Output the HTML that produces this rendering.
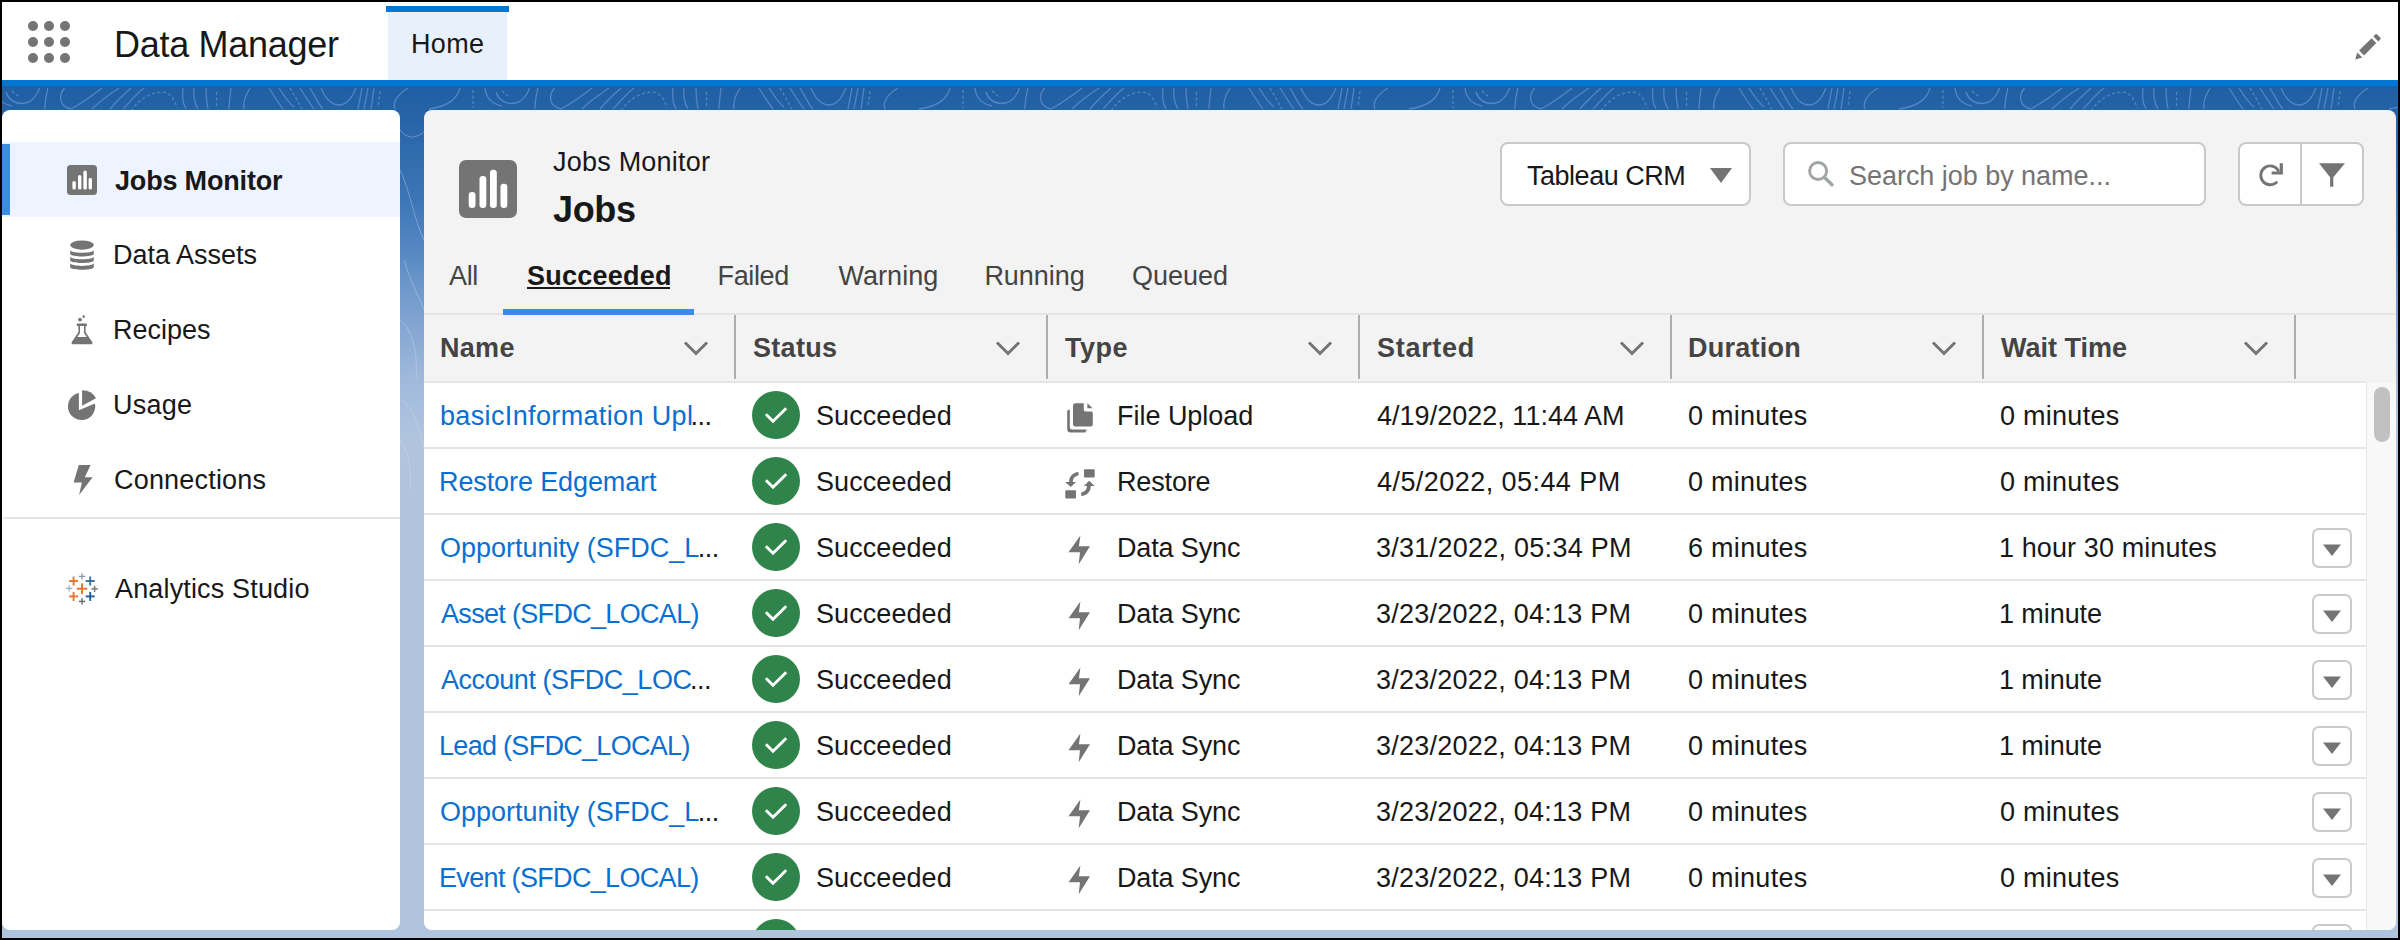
<!DOCTYPE html>
<html><head><meta charset="utf-8">
<style>
*{box-sizing:border-box;margin:0;padding:0}
html,body{width:2400px;height:940px;overflow:hidden;background:#000;font-family:"Liberation Sans",sans-serif;color:#181818}
.abs{position:absolute}
.t{position:absolute;white-space:nowrap}
#frame{position:absolute;left:0;top:0;width:2400px;height:940px;overflow:hidden}
#bg{position:absolute;left:2px;top:86px;width:2396px;height:852px;background:linear-gradient(to bottom,#1f5fa3 0px,#2562a6 24px,#3d76b7 114px,#5587c2 164px,#7099cc 204px,#a0b9db 294px,#b0c4de 354px,#b0c4de 100%)}
#hdr{position:absolute;left:2px;top:2px;width:2396px;height:78px;background:#fff}
.dot{position:absolute;width:10px;height:10px;border-radius:50%;background:#747474}
.box{border:2px solid #c9c9c9;border-radius:8px;background:#fff}
</style></head>
<body><div id="frame"><div id="bg"></div><svg class="abs" style="left:2px;top:86px;overflow:hidden" width="2396" height="24"><g fill="none" stroke="#6393cf" stroke-width="1.3" opacity="0.75"><g transform="translate(-490,0)"><g><path d="M4,6 C8,20 30,24 37.5,2"/><path d="M45.8,2 C44,10 43,18 42.7,23"/><path d="M62.5,2 C56,10 57,20 69,23"/><path d="M100,2 C90,10 78,18 69,23"/><path d="M117,2 C105,10 95,18 90,23"/><path d="M129,2 C120,10 112,18 108,23"/><path d="M142,2 C132,10 126,18 121,23"/><path d="M181,2 C180,10 181,18 184,23"/><path d="M192,2 C191,10 193,18 196,23"/><path d="M204,2 C204,10 205,18 206,23"/><path d="M229,2 C228,10 227,18 227,23"/><path d="M248,2 C243,10 241,18 242,23"/><path d="M267,2 C272,10 277,18 281,23"/><path d="M277,2 C282,10 287,17 292,21"/><path d="M298,2 C303,10 308,18 312,23"/><path d="M308,2 C313,10 316,18 321,23"/><path d="M319,2 C324,14 330,19 337,19 C345,19 350,12 354,2"/><path d="M360,2 L356,23"/><path d="M366,2 L362,23"/><path d="M372,2 L369,23"/><path d="M406,2 C396,8 390,16 393,23"/><path d="M458,2 C455,12 448,20 427,23"/><path d="M483,2 C484,12 490,18 500,20"/></g><g stroke-dasharray="3 2.5"><path d="M10,5 l6,5"/><path d="M129,25 C138,12 150,6 160,6 C168,6 173,14 175,22"/><path d="M214.5,6 V21"/><path d="M288,2 L300,23"/><path d="M378,5 L376,21"/><path d="M471,4 V22"/></g></g><g transform="translate(0,0)"><g><path d="M4,6 C8,20 30,24 37.5,2"/><path d="M45.8,2 C44,10 43,18 42.7,23"/><path d="M62.5,2 C56,10 57,20 69,23"/><path d="M100,2 C90,10 78,18 69,23"/><path d="M117,2 C105,10 95,18 90,23"/><path d="M129,2 C120,10 112,18 108,23"/><path d="M142,2 C132,10 126,18 121,23"/><path d="M181,2 C180,10 181,18 184,23"/><path d="M192,2 C191,10 193,18 196,23"/><path d="M204,2 C204,10 205,18 206,23"/><path d="M229,2 C228,10 227,18 227,23"/><path d="M248,2 C243,10 241,18 242,23"/><path d="M267,2 C272,10 277,18 281,23"/><path d="M277,2 C282,10 287,17 292,21"/><path d="M298,2 C303,10 308,18 312,23"/><path d="M308,2 C313,10 316,18 321,23"/><path d="M319,2 C324,14 330,19 337,19 C345,19 350,12 354,2"/><path d="M360,2 L356,23"/><path d="M366,2 L362,23"/><path d="M372,2 L369,23"/><path d="M406,2 C396,8 390,16 393,23"/><path d="M458,2 C455,12 448,20 427,23"/><path d="M483,2 C484,12 490,18 500,20"/></g><g stroke-dasharray="3 2.5"><path d="M10,5 l6,5"/><path d="M129,25 C138,12 150,6 160,6 C168,6 173,14 175,22"/><path d="M214.5,6 V21"/><path d="M288,2 L300,23"/><path d="M378,5 L376,21"/><path d="M471,4 V22"/></g></g><g transform="translate(490,0)"><g><path d="M4,6 C8,20 30,24 37.5,2"/><path d="M45.8,2 C44,10 43,18 42.7,23"/><path d="M62.5,2 C56,10 57,20 69,23"/><path d="M100,2 C90,10 78,18 69,23"/><path d="M117,2 C105,10 95,18 90,23"/><path d="M129,2 C120,10 112,18 108,23"/><path d="M142,2 C132,10 126,18 121,23"/><path d="M181,2 C180,10 181,18 184,23"/><path d="M192,2 C191,10 193,18 196,23"/><path d="M204,2 C204,10 205,18 206,23"/><path d="M229,2 C228,10 227,18 227,23"/><path d="M248,2 C243,10 241,18 242,23"/><path d="M267,2 C272,10 277,18 281,23"/><path d="M277,2 C282,10 287,17 292,21"/><path d="M298,2 C303,10 308,18 312,23"/><path d="M308,2 C313,10 316,18 321,23"/><path d="M319,2 C324,14 330,19 337,19 C345,19 350,12 354,2"/><path d="M360,2 L356,23"/><path d="M366,2 L362,23"/><path d="M372,2 L369,23"/><path d="M406,2 C396,8 390,16 393,23"/><path d="M458,2 C455,12 448,20 427,23"/><path d="M483,2 C484,12 490,18 500,20"/></g><g stroke-dasharray="3 2.5"><path d="M10,5 l6,5"/><path d="M129,25 C138,12 150,6 160,6 C168,6 173,14 175,22"/><path d="M214.5,6 V21"/><path d="M288,2 L300,23"/><path d="M378,5 L376,21"/><path d="M471,4 V22"/></g></g><g transform="translate(980,0)"><g><path d="M4,6 C8,20 30,24 37.5,2"/><path d="M45.8,2 C44,10 43,18 42.7,23"/><path d="M62.5,2 C56,10 57,20 69,23"/><path d="M100,2 C90,10 78,18 69,23"/><path d="M117,2 C105,10 95,18 90,23"/><path d="M129,2 C120,10 112,18 108,23"/><path d="M142,2 C132,10 126,18 121,23"/><path d="M181,2 C180,10 181,18 184,23"/><path d="M192,2 C191,10 193,18 196,23"/><path d="M204,2 C204,10 205,18 206,23"/><path d="M229,2 C228,10 227,18 227,23"/><path d="M248,2 C243,10 241,18 242,23"/><path d="M267,2 C272,10 277,18 281,23"/><path d="M277,2 C282,10 287,17 292,21"/><path d="M298,2 C303,10 308,18 312,23"/><path d="M308,2 C313,10 316,18 321,23"/><path d="M319,2 C324,14 330,19 337,19 C345,19 350,12 354,2"/><path d="M360,2 L356,23"/><path d="M366,2 L362,23"/><path d="M372,2 L369,23"/><path d="M406,2 C396,8 390,16 393,23"/><path d="M458,2 C455,12 448,20 427,23"/><path d="M483,2 C484,12 490,18 500,20"/></g><g stroke-dasharray="3 2.5"><path d="M10,5 l6,5"/><path d="M129,25 C138,12 150,6 160,6 C168,6 173,14 175,22"/><path d="M214.5,6 V21"/><path d="M288,2 L300,23"/><path d="M378,5 L376,21"/><path d="M471,4 V22"/></g></g><g transform="translate(1470,0)"><g><path d="M4,6 C8,20 30,24 37.5,2"/><path d="M45.8,2 C44,10 43,18 42.7,23"/><path d="M62.5,2 C56,10 57,20 69,23"/><path d="M100,2 C90,10 78,18 69,23"/><path d="M117,2 C105,10 95,18 90,23"/><path d="M129,2 C120,10 112,18 108,23"/><path d="M142,2 C132,10 126,18 121,23"/><path d="M181,2 C180,10 181,18 184,23"/><path d="M192,2 C191,10 193,18 196,23"/><path d="M204,2 C204,10 205,18 206,23"/><path d="M229,2 C228,10 227,18 227,23"/><path d="M248,2 C243,10 241,18 242,23"/><path d="M267,2 C272,10 277,18 281,23"/><path d="M277,2 C282,10 287,17 292,21"/><path d="M298,2 C303,10 308,18 312,23"/><path d="M308,2 C313,10 316,18 321,23"/><path d="M319,2 C324,14 330,19 337,19 C345,19 350,12 354,2"/><path d="M360,2 L356,23"/><path d="M366,2 L362,23"/><path d="M372,2 L369,23"/><path d="M406,2 C396,8 390,16 393,23"/><path d="M458,2 C455,12 448,20 427,23"/><path d="M483,2 C484,12 490,18 500,20"/></g><g stroke-dasharray="3 2.5"><path d="M10,5 l6,5"/><path d="M129,25 C138,12 150,6 160,6 C168,6 173,14 175,22"/><path d="M214.5,6 V21"/><path d="M288,2 L300,23"/><path d="M378,5 L376,21"/><path d="M471,4 V22"/></g></g><g transform="translate(1960,0)"><g><path d="M4,6 C8,20 30,24 37.5,2"/><path d="M45.8,2 C44,10 43,18 42.7,23"/><path d="M62.5,2 C56,10 57,20 69,23"/><path d="M100,2 C90,10 78,18 69,23"/><path d="M117,2 C105,10 95,18 90,23"/><path d="M129,2 C120,10 112,18 108,23"/><path d="M142,2 C132,10 126,18 121,23"/><path d="M181,2 C180,10 181,18 184,23"/><path d="M192,2 C191,10 193,18 196,23"/><path d="M204,2 C204,10 205,18 206,23"/><path d="M229,2 C228,10 227,18 227,23"/><path d="M248,2 C243,10 241,18 242,23"/><path d="M267,2 C272,10 277,18 281,23"/><path d="M277,2 C282,10 287,17 292,21"/><path d="M298,2 C303,10 308,18 312,23"/><path d="M308,2 C313,10 316,18 321,23"/><path d="M319,2 C324,14 330,19 337,19 C345,19 350,12 354,2"/><path d="M360,2 L356,23"/><path d="M366,2 L362,23"/><path d="M372,2 L369,23"/><path d="M406,2 C396,8 390,16 393,23"/><path d="M458,2 C455,12 448,20 427,23"/><path d="M483,2 C484,12 490,18 500,20"/></g><g stroke-dasharray="3 2.5"><path d="M10,5 l6,5"/><path d="M129,25 C138,12 150,6 160,6 C168,6 173,14 175,22"/><path d="M214.5,6 V21"/><path d="M288,2 L300,23"/><path d="M378,5 L376,21"/><path d="M471,4 V22"/></g></g><g transform="translate(2450,0)"><g><path d="M4,6 C8,20 30,24 37.5,2"/><path d="M45.8,2 C44,10 43,18 42.7,23"/><path d="M62.5,2 C56,10 57,20 69,23"/><path d="M100,2 C90,10 78,18 69,23"/><path d="M117,2 C105,10 95,18 90,23"/><path d="M129,2 C120,10 112,18 108,23"/><path d="M142,2 C132,10 126,18 121,23"/><path d="M181,2 C180,10 181,18 184,23"/><path d="M192,2 C191,10 193,18 196,23"/><path d="M204,2 C204,10 205,18 206,23"/><path d="M229,2 C228,10 227,18 227,23"/><path d="M248,2 C243,10 241,18 242,23"/><path d="M267,2 C272,10 277,18 281,23"/><path d="M277,2 C282,10 287,17 292,21"/><path d="M298,2 C303,10 308,18 312,23"/><path d="M308,2 C313,10 316,18 321,23"/><path d="M319,2 C324,14 330,19 337,19 C345,19 350,12 354,2"/><path d="M360,2 L356,23"/><path d="M366,2 L362,23"/><path d="M372,2 L369,23"/><path d="M406,2 C396,8 390,16 393,23"/><path d="M458,2 C455,12 448,20 427,23"/><path d="M483,2 C484,12 490,18 500,20"/></g><g stroke-dasharray="3 2.5"><path d="M10,5 l6,5"/><path d="M129,25 C138,12 150,6 160,6 C168,6 173,14 175,22"/><path d="M214.5,6 V21"/><path d="M288,2 L300,23"/><path d="M378,5 L376,21"/><path d="M471,4 V22"/></g></g></g></svg>
<div id="hdr"><div class="dot" style="left:26px;top:19px"></div><div class="dot" style="left:42px;top:19px"></div><div class="dot" style="left:58px;top:19px"></div><div class="dot" style="left:26px;top:35px"></div><div class="dot" style="left:42px;top:35px"></div><div class="dot" style="left:58px;top:35px"></div><div class="dot" style="left:26px;top:51px"></div><div class="dot" style="left:42px;top:51px"></div><div class="dot" style="left:58px;top:51px"></div></div><div class="t" style="left:114.00px;top:26.53px;font-size:36px;line-height:36px;font-weight:400;color:#181818;letter-spacing:-0.286px;">Data Manager</div><div class="abs" style="left:388px;top:12px;width:119px;height:68px;background:#e8f1fb"></div><div class="abs" style="left:386px;top:6px;width:123px;height:6px;background:#0176d3"></div><div class="t" style="left:411.00px;top:31.14px;font-size:27px;line-height:27px;font-weight:400;color:#181818;letter-spacing:0.331px;">Home</div><svg class="abs" style="left:2352px;top:32px" width="32" height="32" viewBox="0 0 32 32"><g fill="#747474"><path d="M7.1,18.6 L19.6,6.2 L24.3,10.9 L12.1,23.4 Z"/><path d="M21.4,4.4 L23.2,2.6 Q24.2,1.6 25.2,2.6 L28.2,5.6 Q29.2,6.6 28.2,7.6 L26.4,9.4 Z"/><path d="M5.3,20.4 L10.3,25.6 L3.2,27.5 Z"/></g></svg><div class="abs" style="left:2px;top:80px;width:2396px;height:6px;background:#0176d3"></div><svg class="abs" style="left:400px;top:110px" width="24" height="380"><g fill="none" stroke="#dbe6f3" stroke-width="1" opacity="0.35"><path d="M0,20 C8,30 16,28 24,22"/><path d="M0,60 C10,80 14,110 24,130"/><path d="M4,150 C10,170 20,190 24,200"/><path d="M0,210 C12,220 18,240 16,270"/><path d="M2,290 C14,300 20,320 24,340"/><path d="M0,330 C8,340 12,360 10,380"/></g></svg><div class="abs" style="left:2px;top:110px;width:398px;height:820px;background:#fff;border-radius:8px"></div><div class="abs" style="left:2px;top:142px;width:398px;height:75px;background:#eef4ff"></div><div class="abs" style="left:2px;top:144px;width:8px;height:71px;background:#3b8beb"></div><svg class="abs" style="left:67px;top:165px" width="30" height="30" viewBox="0 0 30 30"><rect width="30" height="30" rx="3.5" fill="#747474"/><g fill="#fff"><rect x="5.4" y="16" width="3.4" height="8.6" rx="1.7"/><rect x="11" y="10" width="3.4" height="14.6" rx="1.7"/><rect x="16.4" y="5.5" width="3.4" height="19.1" rx="1.7"/><rect x="21.6" y="12.7" width="3.4" height="11.9" rx="1.7"/></g></svg><div class="t" style="left:115.00px;top:167.74px;font-size:27px;line-height:27px;font-weight:700;color:#181818;letter-spacing:-0.180px;">Jobs Monitor</div><svg class="abs" style="left:69px;top:240px" width="26" height="32" viewBox="0 0 26 32"><g fill="#747474"><ellipse cx="13" cy="5.1" rx="11.8" ry="4.6"/><path d="M1.2,9.9 C1.2,13.60 24.8,13.60 24.8,9.9 V13.70 C24.8,17.40 1.2,17.40 1.2,13.70 Z"/><path d="M1.2,16.5 C1.2,20.20 24.8,20.20 24.8,16.5 V20.30 C24.8,24.00 1.2,24.00 1.2,20.30 Z"/><path d="M1.2,23.1 C1.2,26.80 24.8,26.80 24.8,23.1 V26.90 C24.8,30.60 1.2,30.60 1.2,26.90 Z"/></g></svg><div class="t" style="left:113.00px;top:241.84px;font-size:27px;line-height:27px;font-weight:400;color:#181818;letter-spacing:-0.006px;">Data Assets</div><svg class="abs" style="left:70px;top:314px" width="24" height="32" viewBox="0 0 24 32"><g fill="#747474"><circle cx="10" cy="5.6" r="1.9"/><circle cx="13.7" cy="2.6" r="1.3"/><rect x="6.8" y="9.6" width="10.1" height="2.4" rx="0.6"/><path d="M8.4,11.7 H15.6 V18.3 L22.2,28 Q23.2,30.3 20.6,30.3 H3.4 Q0.8,30.3 1.8,28 L8.4,18.3 Z"/></g><path fill="#fff" d="M10,11.9 H14 V18.9 L16.6,23.1 H7.4 L10,18.9 Z"/></svg><div class="t" style="left:113.00px;top:316.94px;font-size:27px;line-height:27px;font-weight:400;color:#181818;letter-spacing:-0.008px;">Recipes</div><svg class="abs" style="left:67px;top:389px" width="32" height="33" viewBox="0 0 32 33"><g fill="#747474"><path d="M11.9,4 V21.3 L27.9,14.4 A13.65,13.65 0 1 1 11.9,4 Z"/><path d="M15.1,1.3 V16.7 L29,9.3 A15.5,15.5 0 0 0 15.1,1.3 Z"/></g></svg><div class="t" style="left:113.00px;top:391.94px;font-size:27px;line-height:27px;font-weight:400;color:#181818;letter-spacing:0.242px;">Usage</div><svg class="abs" style="left:71px;top:464px" width="22" height="32" viewBox="0 0 22 32"><path fill="#747474" d="M7.8,1 H19.6 L13.8,13.3 H21.6 L8.1,31 L10.9,18.5 H2.6 Z"/></svg><div class="t" style="left:114.00px;top:467.44px;font-size:27px;line-height:27px;font-weight:400;color:#181818;letter-spacing:0.190px;">Connections</div><div class="abs" style="left:3px;top:517px;width:397px;height:2px;background:#e5e5e5"></div><svg class="abs" style="left:66px;top:573px" width="33" height="33" viewBox="0 0 33 33"><rect x="10.75" y="14.7" width="10.5" height="2.0" fill="#e8762d"/><rect x="15.0" y="10.45" width="2.0" height="10.5" fill="#e8762d"/><rect x="3.0999999999999996" y="7.05" width="9" height="1.9" fill="#e8762d"/><rect x="6.6499999999999995" y="3.5" width="1.9" height="9" fill="#e8762d"/><rect x="3.0999999999999996" y="22.45" width="9" height="1.9" fill="#e8762d"/><rect x="6.6499999999999995" y="18.9" width="1.9" height="9" fill="#e8762d"/><rect x="19.7" y="7.05" width="9" height="1.9" fill="#3a6ea5"/><rect x="23.25" y="3.5" width="1.9" height="9" fill="#3a6ea5"/><rect x="19.7" y="22.45" width="9" height="1.9" fill="#1f5f9f"/><rect x="23.25" y="18.9" width="1.9" height="9" fill="#1f5f9f"/><rect x="12.8" y="2.75" width="6.4" height="1.3" fill="#8a9aaa"/><rect x="15.35" y="0.19999999999999973" width="1.3" height="6.4" fill="#8a9aaa"/><rect x="12.8" y="27.65" width="6.4" height="1.5" fill="#6f6f6f"/><rect x="15.25" y="25.2" width="1.5" height="6.4" fill="#6f6f6f"/><rect x="-0.10000000000000009" y="14.8" width="6.4" height="1.2" fill="#9aabbb"/><rect x="2.5" y="12.2" width="1.2" height="6.4" fill="#9aabbb"/><rect x="25.400000000000002" y="15.15" width="6.4" height="1.5" fill="#7a7a7a"/><rect x="27.85" y="12.7" width="1.5" height="6.4" fill="#7a7a7a"/></svg><div class="t" style="left:115.00px;top:576.04px;font-size:27px;line-height:27px;font-weight:400;color:#181818;letter-spacing:0.155px;">Analytics Studio</div><div class="abs" style="left:424px;top:110px;width:1972px;height:820px;background:#f3f3f3;border-radius:8px"></div><svg class="abs" style="left:459px;top:160px" width="58" height="58" viewBox="0 0 58 58"><rect width="58" height="58" rx="7" fill="#747474"/><g fill="#fff"><rect x="9.7" y="32" width="6.8" height="16" rx="3.2"/><rect x="20.5" y="16" width="6.8" height="32" rx="3.2"/><rect x="31" y="9.7" width="6.8" height="38.3" rx="3.2"/><rect x="41.5" y="23.7" width="6.8" height="24.3" rx="3.2"/></g></svg><div class="t" style="left:553.00px;top:149.14px;font-size:27px;line-height:27px;font-weight:400;color:#181818;letter-spacing:0.221px;">Jobs Monitor</div><div class="t" style="left:553.00px;top:191.53px;font-size:36px;line-height:36px;font-weight:700;color:#181818;letter-spacing:-0.334px;">Jobs</div><div class="abs box" style="left:1500px;top:142px;width:251px;height:64px"></div><div class="t" style="left:1527.00px;top:162.94px;font-size:27px;line-height:27px;font-weight:400;color:#181818;letter-spacing:-0.478px;">Tableau CRM</div><svg class="abs" style="left:1709px;top:167px" width="24" height="17" viewBox="0 0 24 17"><path fill="#747474" d="M1,1 H23 L12,16 Z"/></svg><div class="abs box" style="left:1783px;top:142px;width:423px;height:64px"></div><svg class="abs" style="left:1806px;top:160px" width="30" height="30" viewBox="0 0 30 30"><g fill="none" stroke="#a0a5a3" stroke-width="2.9"><circle cx="12.1" cy="11" r="8.5"/><path d="M18.5,17.4 L26,24.8" stroke-linecap="round" stroke-width="3.4"/></g></svg><div class="t" style="left:1849.00px;top:163.14px;font-size:27px;line-height:27px;font-weight:400;color:#747474;letter-spacing:-0.037px;">Search job by name...</div><div class="abs box" style="left:2238px;top:142px;width:126px;height:64px"></div><div class="abs" style="left:2300px;top:143px;width:2px;height:62px;background:#c9c9c9"></div><svg class="abs" style="left:2257px;top:162px" width="29" height="27" viewBox="0 0 29 27"><path d="M19.4,20.5 A9.45,9.45 0 1 1 21.3,8.4" fill="none" stroke="#747474" stroke-width="2.9" stroke-linecap="round"/><path fill="#747474" d="M22.7,1.3 H25.9 V12.6 H14.6 V9.5 H22.7 Z"/></svg><svg class="abs" style="left:2317px;top:163px" width="29" height="25" viewBox="0 0 29 25"><path fill="#747474" d="M2,0.3 H28 L16.3,14.3 V23.7 H13.1 V14.3 Z"/></svg><div class="t" style="left:449.00px;top:263.34px;font-size:27px;line-height:27px;font-weight:400;color:#444;letter-spacing:-0.354px;">All</div><div class="t" style="left:527.00px;top:263.34px;font-size:27px;line-height:27px;font-weight:700;color:#181818;letter-spacing:0.241px;">Succeeded</div><div class="t" style="left:717.50px;top:263.34px;font-size:27px;line-height:27px;font-weight:400;color:#444;letter-spacing:-0.364px;">Failed</div><div class="t" style="left:838.60px;top:263.34px;font-size:27px;line-height:27px;font-weight:400;color:#444;letter-spacing:0.013px;">Warning</div><div class="t" style="left:984.40px;top:263.34px;font-size:27px;line-height:27px;font-weight:400;color:#444;letter-spacing:-0.027px;">Running</div><div class="t" style="left:1132.00px;top:263.34px;font-size:27px;line-height:27px;font-weight:400;color:#444;letter-spacing:-0.013px;">Queued</div><div class="abs" style="left:424px;top:313px;width:1972px;height:2px;background:#e5e5e5"></div><div class="abs" style="left:503px;top:309px;width:191px;height:6px;background:#3b8beb"></div><div class="abs" style="left:527px;top:287px;width:143px;height:2px;background:#181818"></div><div class="t" style="left:440.00px;top:335.44px;font-size:27px;line-height:27px;font-weight:700;color:#444;letter-spacing:0.293px;">Name</div><svg class="abs" style="left:682px;top:339px" width="28" height="19" viewBox="0 0 28 19"><path d="M3,3.5 L14,14.5 L25,3.5" fill="none" stroke="#747474" stroke-width="3"/></svg><div class="abs" style="left:734px;top:315px;width:2px;height:64px;background:#adadad"></div><div class="t" style="left:753.00px;top:335.44px;font-size:27px;line-height:27px;font-weight:700;color:#444;letter-spacing:0.300px;">Status</div><svg class="abs" style="left:994px;top:339px" width="28" height="19" viewBox="0 0 28 19"><path d="M3,3.5 L14,14.5 L25,3.5" fill="none" stroke="#747474" stroke-width="3"/></svg><div class="abs" style="left:1046px;top:315px;width:2px;height:64px;background:#adadad"></div><div class="t" style="left:1065.00px;top:335.44px;font-size:27px;line-height:27px;font-weight:700;color:#444;letter-spacing:0.534px;">Type</div><svg class="abs" style="left:1306px;top:339px" width="28" height="19" viewBox="0 0 28 19"><path d="M3,3.5 L14,14.5 L25,3.5" fill="none" stroke="#747474" stroke-width="3"/></svg><div class="abs" style="left:1358px;top:315px;width:2px;height:64px;background:#adadad"></div><div class="t" style="left:1377.00px;top:335.44px;font-size:27px;line-height:27px;font-weight:700;color:#444;letter-spacing:0.712px;">Started</div><svg class="abs" style="left:1618px;top:339px" width="28" height="19" viewBox="0 0 28 19"><path d="M3,3.5 L14,14.5 L25,3.5" fill="none" stroke="#747474" stroke-width="3"/></svg><div class="abs" style="left:1670px;top:315px;width:2px;height:64px;background:#adadad"></div><div class="t" style="left:1688.00px;top:335.44px;font-size:27px;line-height:27px;font-weight:700;color:#444;letter-spacing:0.257px;">Duration</div><svg class="abs" style="left:1930px;top:339px" width="28" height="19" viewBox="0 0 28 19"><path d="M3,3.5 L14,14.5 L25,3.5" fill="none" stroke="#747474" stroke-width="3"/></svg><div class="abs" style="left:1982px;top:315px;width:2px;height:64px;background:#adadad"></div><div class="t" style="left:2001.00px;top:335.44px;font-size:27px;line-height:27px;font-weight:700;color:#444;letter-spacing:-0.001px;">Wait Time</div><svg class="abs" style="left:2242px;top:339px" width="28" height="19" viewBox="0 0 28 19"><path d="M3,3.5 L14,14.5 L25,3.5" fill="none" stroke="#747474" stroke-width="3"/></svg><div class="abs" style="left:2294px;top:315px;width:2px;height:64px;background:#adadad"></div><div class="abs" style="left:424px;top:381px;width:1972px;height:549px;overflow:hidden;border-radius:0 0 8px 8px"><div class="abs" style="left:-424px;top:-381px;width:2400px;height:940px"><div class="abs" style="left:424px;top:381px;width:1942px;height:2px;background:#e5e5e5"></div><div class="abs" style="left:424px;top:383px;width:1942px;height:65px;background:#fff"></div><div class="abs" style="left:424px;top:447px;width:1942px;height:2px;background:#e5e5e5"></div><div class="t" style="left:440.00px;top:403.14px;font-size:27px;line-height:27px;font-weight:400;color:#0a6fd0;letter-spacing:0.357px;">basicInformation Upl</div><div class="t" style="left:690.40px;top:403.14px;font-size:27px;line-height:27px;font-weight:400;color:#181818;letter-spacing:-0.501px;">...</div><svg class="abs" style="left:752px;top:391px" width="48" height="48" viewBox="0 0 48 48"><circle cx="24" cy="24" r="24" fill="#2e844a"/><path d="M13.9,23.3 L21,30.3 L34.2,17.2" fill="none" stroke="#fff" stroke-width="2.9"/></svg><div class="t" style="left:816.00px;top:403.14px;font-size:27px;line-height:27px;font-weight:400;color:#181818;letter-spacing:0.076px;">Succeeded</div><svg class="abs" style="left:1060px;top:398px" width="40" height="40" viewBox="0 0 40 40"><g fill="#747474"><path d="M13,7.8 Q13,5.3 15.5,5.3 H23.8 V11.6 Q23.8,13.6 25.8,13.6 H31.3 Q32.8,13.6 32.8,15.1 V26 Q32.8,28.5 30.3,28.5 H15.5 Q13,28.5 13,26 Z"/><path d="M27.4,5.3 L32.6,10.2 H27.4 Z"/><path d="M7.2,12.8 L9.8,11.3 V29 Q9.8,31.5 12.3,31.5 H26.8 L25.3,34.5 H10.7 Q7.2,34.5 7.2,31 Z"/></g></svg><div class="t" style="left:1117.00px;top:403.14px;font-size:27px;line-height:27px;font-weight:400;color:#181818;letter-spacing:-0.025px;">File Upload</div><div class="t" style="left:1377.00px;top:403.14px;font-size:27px;line-height:27px;font-weight:400;color:#181818;letter-spacing:0.023px;">4/19/2022, 11:44 AM</div><div class="t" style="left:1688.00px;top:403.14px;font-size:27px;line-height:27px;font-weight:400;color:#181818;letter-spacing:0.268px;">0 minutes</div><div class="t" style="left:2000.00px;top:403.14px;font-size:27px;line-height:27px;font-weight:400;color:#181818;letter-spacing:0.268px;">0 minutes</div><div class="abs" style="left:424px;top:449px;width:1942px;height:65px;background:#fff"></div><div class="abs" style="left:424px;top:513px;width:1942px;height:2px;background:#e5e5e5"></div><div class="t" style="left:439.00px;top:469.14px;font-size:27px;line-height:27px;font-weight:400;color:#0a6fd0;letter-spacing:-0.106px;">Restore Edgemart</div><svg class="abs" style="left:752px;top:457px" width="48" height="48" viewBox="0 0 48 48"><circle cx="24" cy="24" r="24" fill="#2e844a"/><path d="M13.9,23.3 L21,30.3 L34.2,17.2" fill="none" stroke="#fff" stroke-width="2.9"/></svg><div class="t" style="left:816.00px;top:469.14px;font-size:27px;line-height:27px;font-weight:400;color:#181818;letter-spacing:0.076px;">Succeeded</div><svg class="abs" style="left:1060px;top:464px" width="40" height="40" viewBox="0 0 40 40"><g fill="#747474"><rect x="24" y="5.3" width="10.7" height="8.3" rx="1"/><rect x="5.3" y="26.2" width="10.7" height="8.3" rx="1"/><path d="M18.5,7.9 V11.5 C15,12 12.8,14.5 12.8,17.9 H16 L10.9,23 L5.1,17.9 H9.1 C9.1,12.2 13,8.3 18.5,7.9 Z"/><path d="M21.3,31.9 V28.3 C24.8,27.8 27,25.3 27,21.9 H24 L29.1,16.8 L34.7,21.9 H30.8 C30.8,27.6 26.8,31.5 21.3,31.9 Z"/></g></svg><div class="t" style="left:1117.00px;top:469.14px;font-size:27px;line-height:27px;font-weight:400;color:#181818;letter-spacing:-0.154px;">Restore</div><div class="t" style="left:1377.00px;top:469.14px;font-size:27px;line-height:27px;font-weight:400;color:#181818;letter-spacing:0.442px;">4/5/2022, 05:44 PM</div><div class="t" style="left:1688.00px;top:469.14px;font-size:27px;line-height:27px;font-weight:400;color:#181818;letter-spacing:0.268px;">0 minutes</div><div class="t" style="left:2000.00px;top:469.14px;font-size:27px;line-height:27px;font-weight:400;color:#181818;letter-spacing:0.268px;">0 minutes</div><div class="abs" style="left:424px;top:515px;width:1942px;height:65px;background:#fff"></div><div class="abs" style="left:424px;top:579px;width:1942px;height:2px;background:#e5e5e5"></div><div class="t" style="left:440.00px;top:535.14px;font-size:27px;line-height:27px;font-weight:400;color:#0a6fd0;letter-spacing:-0.021px;">Opportunity (SFDC_L</div><div class="t" style="left:697.70px;top:535.14px;font-size:27px;line-height:27px;font-weight:400;color:#181818;letter-spacing:-0.501px;">...</div><svg class="abs" style="left:752px;top:523px" width="48" height="48" viewBox="0 0 48 48"><circle cx="24" cy="24" r="24" fill="#2e844a"/><path d="M13.9,23.3 L21,30.3 L34.2,17.2" fill="none" stroke="#fff" stroke-width="2.9"/></svg><div class="t" style="left:816.00px;top:535.14px;font-size:27px;line-height:27px;font-weight:400;color:#181818;letter-spacing:0.076px;">Succeeded</div><svg class="abs" style="left:1060px;top:530px" width="40" height="40" viewBox="0 0 40 40"><path fill="#747474" d="M20.4,5.5 L8.5,22.3 H20 L18.7,34.3 L30,16.2 H18.9 Z"/></svg><div class="t" style="left:1117.00px;top:535.14px;font-size:27px;line-height:27px;font-weight:400;color:#181818;letter-spacing:-0.132px;">Data Sync</div><div class="t" style="left:1376.00px;top:535.14px;font-size:27px;line-height:27px;font-weight:400;color:#181818;letter-spacing:0.267px;">3/31/2022, 05:34 PM</div><div class="t" style="left:1688.00px;top:535.14px;font-size:27px;line-height:27px;font-weight:400;color:#181818;letter-spacing:0.280px;">6 minutes</div><div class="t" style="left:1999.00px;top:535.14px;font-size:27px;line-height:27px;font-weight:400;color:#181818;letter-spacing:0.104px;">1 hour 30 minutes</div><div class="abs" style="left:2312px;top:528px;width:40px;height:40px;border:2px solid #c9c9c9;border-radius:7px;background:#fff"></div><svg class="abs" style="left:2322px;top:543px" width="20" height="14" viewBox="0 0 20 14"><path fill="#747474" d="M1,1.5 H19 L10,13 Z"/></svg><div class="abs" style="left:424px;top:581px;width:1942px;height:65px;background:#fff"></div><div class="abs" style="left:424px;top:645px;width:1942px;height:2px;background:#e5e5e5"></div><div class="t" style="left:441.00px;top:601.14px;font-size:27px;line-height:27px;font-weight:400;color:#0a6fd0;letter-spacing:-0.681px;">Asset (SFDC_LOCAL)</div><svg class="abs" style="left:752px;top:589px" width="48" height="48" viewBox="0 0 48 48"><circle cx="24" cy="24" r="24" fill="#2e844a"/><path d="M13.9,23.3 L21,30.3 L34.2,17.2" fill="none" stroke="#fff" stroke-width="2.9"/></svg><div class="t" style="left:816.00px;top:601.14px;font-size:27px;line-height:27px;font-weight:400;color:#181818;letter-spacing:0.076px;">Succeeded</div><svg class="abs" style="left:1060px;top:596px" width="40" height="40" viewBox="0 0 40 40"><path fill="#747474" d="M20.4,5.5 L8.5,22.3 H20 L18.7,34.3 L30,16.2 H18.9 Z"/></svg><div class="t" style="left:1117.00px;top:601.14px;font-size:27px;line-height:27px;font-weight:400;color:#181818;letter-spacing:-0.132px;">Data Sync</div><div class="t" style="left:1376.00px;top:601.14px;font-size:27px;line-height:27px;font-weight:400;color:#181818;letter-spacing:0.239px;">3/23/2022, 04:13 PM</div><div class="t" style="left:1688.00px;top:601.14px;font-size:27px;line-height:27px;font-weight:400;color:#181818;letter-spacing:0.268px;">0 minutes</div><div class="t" style="left:1999.00px;top:601.14px;font-size:27px;line-height:27px;font-weight:400;color:#181818;letter-spacing:-0.077px;">1 minute</div><div class="abs" style="left:2312px;top:594px;width:40px;height:40px;border:2px solid #c9c9c9;border-radius:7px;background:#fff"></div><svg class="abs" style="left:2322px;top:609px" width="20" height="14" viewBox="0 0 20 14"><path fill="#747474" d="M1,1.5 H19 L10,13 Z"/></svg><div class="abs" style="left:424px;top:647px;width:1942px;height:65px;background:#fff"></div><div class="abs" style="left:424px;top:711px;width:1942px;height:2px;background:#e5e5e5"></div><div class="t" style="left:441.00px;top:667.14px;font-size:27px;line-height:27px;font-weight:400;color:#0a6fd0;letter-spacing:-0.443px;">Account (SFDC_LOC</div><div class="t" style="left:690.00px;top:667.14px;font-size:27px;line-height:27px;font-weight:400;color:#181818;letter-spacing:-0.501px;">...</div><svg class="abs" style="left:752px;top:655px" width="48" height="48" viewBox="0 0 48 48"><circle cx="24" cy="24" r="24" fill="#2e844a"/><path d="M13.9,23.3 L21,30.3 L34.2,17.2" fill="none" stroke="#fff" stroke-width="2.9"/></svg><div class="t" style="left:816.00px;top:667.14px;font-size:27px;line-height:27px;font-weight:400;color:#181818;letter-spacing:0.076px;">Succeeded</div><svg class="abs" style="left:1060px;top:662px" width="40" height="40" viewBox="0 0 40 40"><path fill="#747474" d="M20.4,5.5 L8.5,22.3 H20 L18.7,34.3 L30,16.2 H18.9 Z"/></svg><div class="t" style="left:1117.00px;top:667.14px;font-size:27px;line-height:27px;font-weight:400;color:#181818;letter-spacing:-0.132px;">Data Sync</div><div class="t" style="left:1376.00px;top:667.14px;font-size:27px;line-height:27px;font-weight:400;color:#181818;letter-spacing:0.239px;">3/23/2022, 04:13 PM</div><div class="t" style="left:1688.00px;top:667.14px;font-size:27px;line-height:27px;font-weight:400;color:#181818;letter-spacing:0.268px;">0 minutes</div><div class="t" style="left:1999.00px;top:667.14px;font-size:27px;line-height:27px;font-weight:400;color:#181818;letter-spacing:-0.077px;">1 minute</div><div class="abs" style="left:2312px;top:660px;width:40px;height:40px;border:2px solid #c9c9c9;border-radius:7px;background:#fff"></div><svg class="abs" style="left:2322px;top:675px" width="20" height="14" viewBox="0 0 20 14"><path fill="#747474" d="M1,1.5 H19 L10,13 Z"/></svg><div class="abs" style="left:424px;top:713px;width:1942px;height:65px;background:#fff"></div><div class="abs" style="left:424px;top:777px;width:1942px;height:2px;background:#e5e5e5"></div><div class="t" style="left:439.00px;top:733.14px;font-size:27px;line-height:27px;font-weight:400;color:#0a6fd0;letter-spacing:-0.701px;">Lead (SFDC_LOCAL)</div><svg class="abs" style="left:752px;top:721px" width="48" height="48" viewBox="0 0 48 48"><circle cx="24" cy="24" r="24" fill="#2e844a"/><path d="M13.9,23.3 L21,30.3 L34.2,17.2" fill="none" stroke="#fff" stroke-width="2.9"/></svg><div class="t" style="left:816.00px;top:733.14px;font-size:27px;line-height:27px;font-weight:400;color:#181818;letter-spacing:0.076px;">Succeeded</div><svg class="abs" style="left:1060px;top:728px" width="40" height="40" viewBox="0 0 40 40"><path fill="#747474" d="M20.4,5.5 L8.5,22.3 H20 L18.7,34.3 L30,16.2 H18.9 Z"/></svg><div class="t" style="left:1117.00px;top:733.14px;font-size:27px;line-height:27px;font-weight:400;color:#181818;letter-spacing:-0.132px;">Data Sync</div><div class="t" style="left:1376.00px;top:733.14px;font-size:27px;line-height:27px;font-weight:400;color:#181818;letter-spacing:0.239px;">3/23/2022, 04:13 PM</div><div class="t" style="left:1688.00px;top:733.14px;font-size:27px;line-height:27px;font-weight:400;color:#181818;letter-spacing:0.268px;">0 minutes</div><div class="t" style="left:1999.00px;top:733.14px;font-size:27px;line-height:27px;font-weight:400;color:#181818;letter-spacing:-0.077px;">1 minute</div><div class="abs" style="left:2312px;top:726px;width:40px;height:40px;border:2px solid #c9c9c9;border-radius:7px;background:#fff"></div><svg class="abs" style="left:2322px;top:741px" width="20" height="14" viewBox="0 0 20 14"><path fill="#747474" d="M1,1.5 H19 L10,13 Z"/></svg><div class="abs" style="left:424px;top:779px;width:1942px;height:65px;background:#fff"></div><div class="abs" style="left:424px;top:843px;width:1942px;height:2px;background:#e5e5e5"></div><div class="t" style="left:440.00px;top:799.14px;font-size:27px;line-height:27px;font-weight:400;color:#0a6fd0;letter-spacing:-0.021px;">Opportunity (SFDC_L</div><div class="t" style="left:697.70px;top:799.14px;font-size:27px;line-height:27px;font-weight:400;color:#181818;letter-spacing:-0.501px;">...</div><svg class="abs" style="left:752px;top:787px" width="48" height="48" viewBox="0 0 48 48"><circle cx="24" cy="24" r="24" fill="#2e844a"/><path d="M13.9,23.3 L21,30.3 L34.2,17.2" fill="none" stroke="#fff" stroke-width="2.9"/></svg><div class="t" style="left:816.00px;top:799.14px;font-size:27px;line-height:27px;font-weight:400;color:#181818;letter-spacing:0.076px;">Succeeded</div><svg class="abs" style="left:1060px;top:794px" width="40" height="40" viewBox="0 0 40 40"><path fill="#747474" d="M20.4,5.5 L8.5,22.3 H20 L18.7,34.3 L30,16.2 H18.9 Z"/></svg><div class="t" style="left:1117.00px;top:799.14px;font-size:27px;line-height:27px;font-weight:400;color:#181818;letter-spacing:-0.132px;">Data Sync</div><div class="t" style="left:1376.00px;top:799.14px;font-size:27px;line-height:27px;font-weight:400;color:#181818;letter-spacing:0.239px;">3/23/2022, 04:13 PM</div><div class="t" style="left:1688.00px;top:799.14px;font-size:27px;line-height:27px;font-weight:400;color:#181818;letter-spacing:0.268px;">0 minutes</div><div class="t" style="left:2000.00px;top:799.14px;font-size:27px;line-height:27px;font-weight:400;color:#181818;letter-spacing:0.268px;">0 minutes</div><div class="abs" style="left:2312px;top:792px;width:40px;height:40px;border:2px solid #c9c9c9;border-radius:7px;background:#fff"></div><svg class="abs" style="left:2322px;top:807px" width="20" height="14" viewBox="0 0 20 14"><path fill="#747474" d="M1,1.5 H19 L10,13 Z"/></svg><div class="abs" style="left:424px;top:845px;width:1942px;height:65px;background:#fff"></div><div class="abs" style="left:424px;top:909px;width:1942px;height:2px;background:#e5e5e5"></div><div class="t" style="left:439.00px;top:865.14px;font-size:27px;line-height:27px;font-weight:400;color:#0a6fd0;letter-spacing:-0.664px;">Event (SFDC_LOCAL)</div><svg class="abs" style="left:752px;top:853px" width="48" height="48" viewBox="0 0 48 48"><circle cx="24" cy="24" r="24" fill="#2e844a"/><path d="M13.9,23.3 L21,30.3 L34.2,17.2" fill="none" stroke="#fff" stroke-width="2.9"/></svg><div class="t" style="left:816.00px;top:865.14px;font-size:27px;line-height:27px;font-weight:400;color:#181818;letter-spacing:0.076px;">Succeeded</div><svg class="abs" style="left:1060px;top:860px" width="40" height="40" viewBox="0 0 40 40"><path fill="#747474" d="M20.4,5.5 L8.5,22.3 H20 L18.7,34.3 L30,16.2 H18.9 Z"/></svg><div class="t" style="left:1117.00px;top:865.14px;font-size:27px;line-height:27px;font-weight:400;color:#181818;letter-spacing:-0.132px;">Data Sync</div><div class="t" style="left:1376.00px;top:865.14px;font-size:27px;line-height:27px;font-weight:400;color:#181818;letter-spacing:0.239px;">3/23/2022, 04:13 PM</div><div class="t" style="left:1688.00px;top:865.14px;font-size:27px;line-height:27px;font-weight:400;color:#181818;letter-spacing:0.268px;">0 minutes</div><div class="t" style="left:2000.00px;top:865.14px;font-size:27px;line-height:27px;font-weight:400;color:#181818;letter-spacing:0.268px;">0 minutes</div><div class="abs" style="left:2312px;top:858px;width:40px;height:40px;border:2px solid #c9c9c9;border-radius:7px;background:#fff"></div><svg class="abs" style="left:2322px;top:873px" width="20" height="14" viewBox="0 0 20 14"><path fill="#747474" d="M1,1.5 H19 L10,13 Z"/></svg><div class="abs" style="left:424px;top:911px;width:1942px;height:65px;background:#fff"></div><div class="abs" style="left:424px;top:975px;width:1942px;height:2px;background:#e5e5e5"></div><svg class="abs" style="left:752px;top:919px" width="48" height="48" viewBox="0 0 48 48"><circle cx="24" cy="24" r="24" fill="#2e844a"/><path d="M13.9,23.3 L21,30.3 L34.2,17.2" fill="none" stroke="#fff" stroke-width="2.9"/></svg><div class="abs" style="left:2312px;top:924px;width:40px;height:40px;border:2px solid #c9c9c9;border-radius:7px;background:#fff"></div><svg class="abs" style="left:2322px;top:939px" width="20" height="14" viewBox="0 0 20 14"><path fill="#747474" d="M1,1.5 H19 L10,13 Z"/></svg><div class="abs" style="left:2366px;top:383px;width:30px;height:547px;background:#f8f8f8;border-left:1px solid #e8e8e8"></div><div class="abs" style="left:2374px;top:387px;width:16px;height:55px;background:#c1c1c1;border-radius:8px"></div></div></div>
</div></body></html>
